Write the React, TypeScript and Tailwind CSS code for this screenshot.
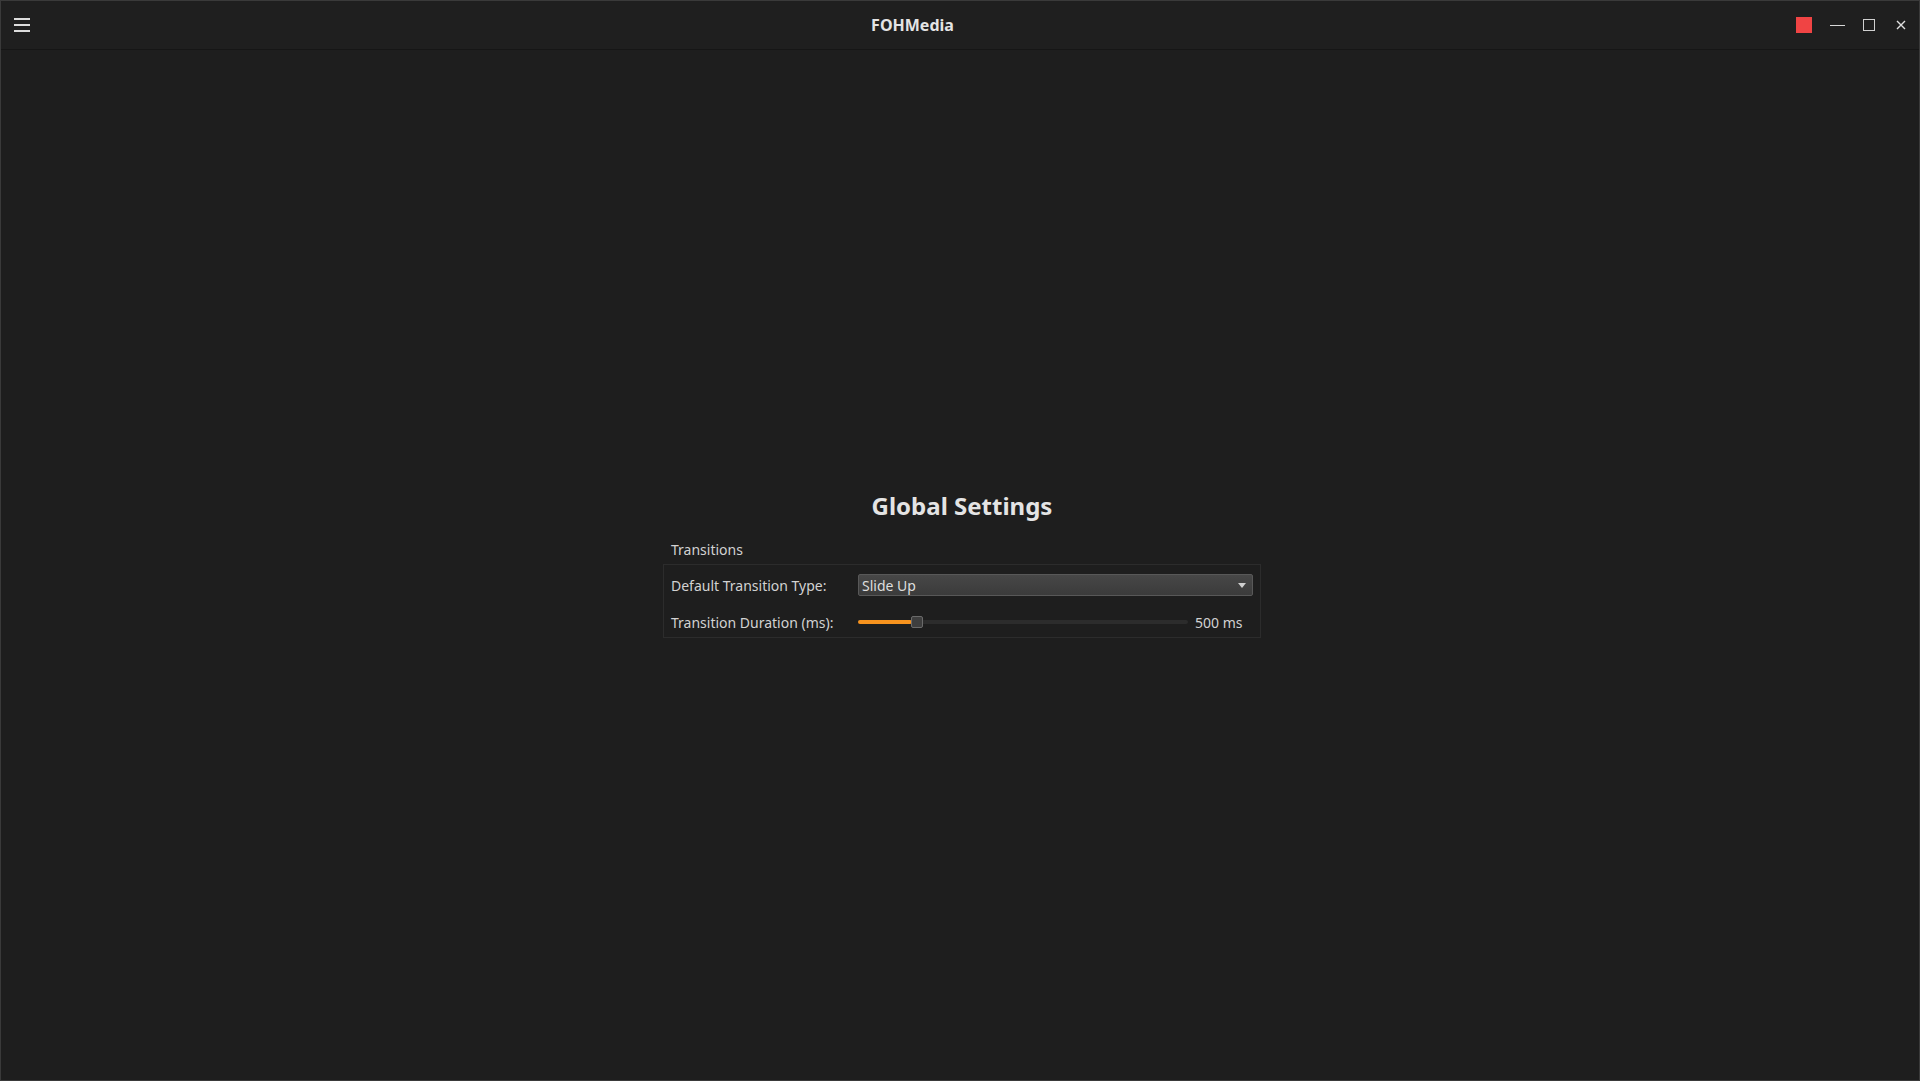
import React from 'react';

const font = { fontFamily: '"Noto Sans", "Open Sans", sans-serif' };

function TitleBar() {
  return (
    <div className="flex h-[49px] items-center border-b border-[#161616] bg-[#1f1f1f]">
      <div className="flex w-[45px] items-center pl-[13px]">
        <div className="flex w-[16px] flex-col gap-[4px]">
          <span className="h-[2px] bg-[#dcdcdc]"></span>
          <span className="h-[2px] bg-[#dcdcdc]"></span>
          <span className="h-[2px] bg-[#dcdcdc]"></span>
        </div>
      </div>
      <div className="flex flex-1 justify-center">
        <span className="text-[16px] font-bold text-[#e4e4e4]">FOHMedia</span>
      </div>
      <div className="flex w-[140px] items-center pl-[17px]">
        <span className="h-[16px] w-[16px] bg-[#f04444]"></span>
        <span className="ml-[18px] h-[1px] w-[15px] bg-[#d8d8d8]"></span>
        <span className="ml-[18px] h-[12px] w-[12px] border border-[#d0d0d0]"></span>
        <svg className="ml-[21px]" width="10" height="10" viewBox="0 0 10 10">
          <path d="M1 1 L9 9 M9 1 L1 9" stroke="#e0e0e0" strokeWidth="1.4" />
        </svg>
      </div>
    </div>
  );
}

function Settings() {
  return (
    <div className="flex w-[598px] flex-col">
      <h1 className="text-center text-[24px] font-bold leading-none text-[#e4e4e4]">Global Settings</h1>
      <div className="mt-[21px] pl-[8px] text-[14px] text-[#d2d2d2]">Transitions</div>
      <div className="mt-[4px] flex flex-col gap-[16px] border border-[#2c2c2c] px-[7px] pt-[9px] pb-[5px]">
        <div className="flex h-[22px] items-center">
          <span className="w-[187px] text-[14px] text-[#d2d2d2]">Default Transition Type:</span>
          <div className="flex h-[22px] flex-1 items-center justify-between rounded-[2px] border border-[#585858] bg-gradient-to-b from-[#474747] to-[#3b3b3b] pl-[3px] pr-[6px]">
            <span className="text-[14px] text-[#dedede]">Slide Up</span>
            <svg width="8" height="5" viewBox="0 0 8 5">
              <path d="M0 0 L8 0 L4 5 Z" fill="#cfcfcf" />
            </svg>
          </div>
        </div>
        <div className="flex h-[20px] items-center">
          <span className="w-[187px] text-[14px] text-[#d2d2d2]">Transition Duration (ms):</span>
          <div className="relative flex h-[12px] w-[330px] items-center">
            <div className="h-[4px] w-full rounded-full bg-[#2c2c2c]"></div>
            <div className="absolute left-0 top-[4px] h-[4px] w-[54px] rounded-full bg-[#f7931e]"></div>
            <div className="absolute left-[53px] top-0 h-[12px] w-[12px] rounded-[2px] border border-[#6a6a6a] bg-[#3e3e3e]"></div>
          </div>
          <span className="ml-[7px] text-[14px] text-[#d2d2d2]">500 ms</span>
        </div>
      </div>
    </div>
  );
}

export default function App() {
  return (
    <div style={font} className="flex h-[1081px] w-[1920px] flex-col overflow-hidden border border-[#3a3a3a] bg-[#1e1e1e]">
      <TitleBar />
      <div className="flex flex-1 justify-center pt-[444px] pl-[4px]">
        <Settings />
      </div>
    </div>
  );
}
